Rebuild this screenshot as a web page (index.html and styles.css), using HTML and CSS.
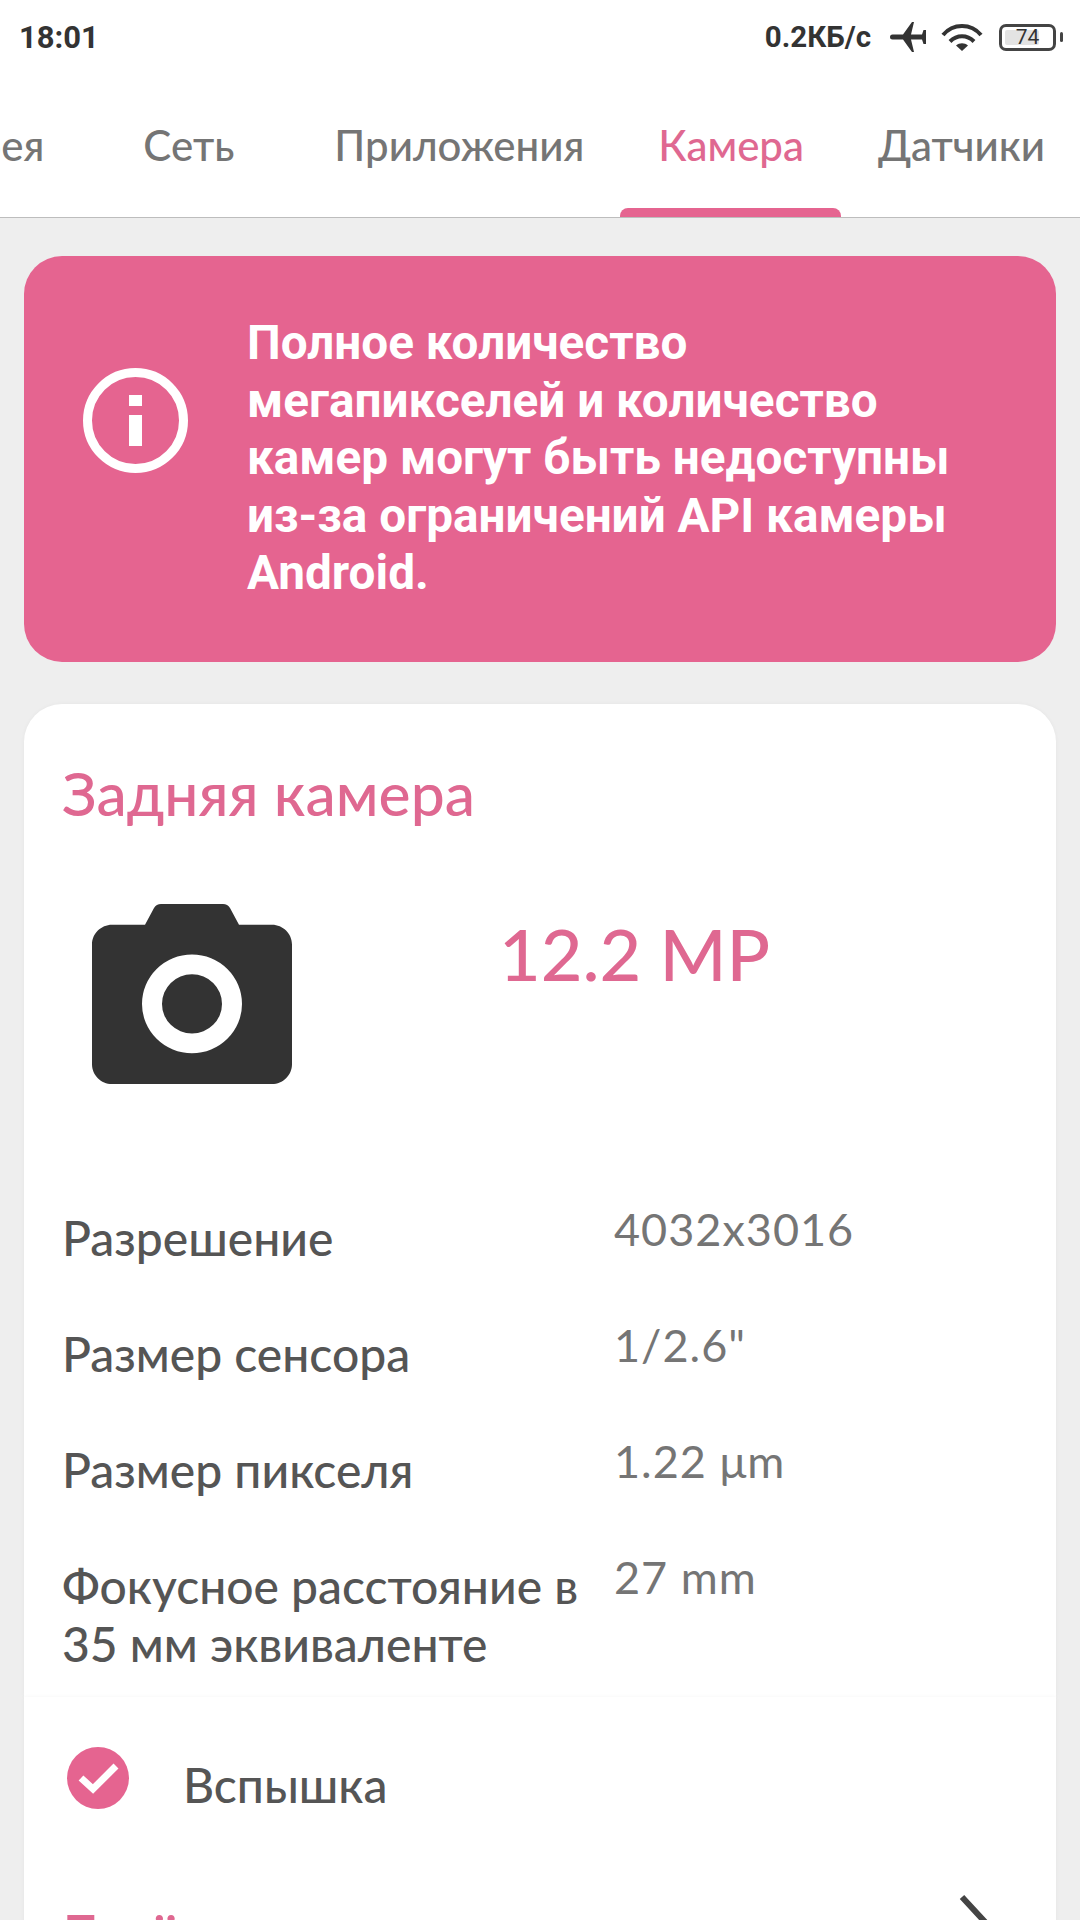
FILE: index.html
```html
<!DOCTYPE html>
<html lang="ru">
<head>
    <meta charset="UTF-8">
    <title>Камера</title>
    <link rel="stylesheet" href="styles.css">
</head>
<body>
    <div class="statusbar">
        <span class="time">18:01</span>
        <div class="status-right">
            <span class="speed">0.2КБ/с</span>
            <svg class="plane" width="36" height="30" viewBox="0 0 36 30">
                <path d="M2.500 12.500H13L22 0h2l-3 12.500h11L33.500 8H36v14h-2.500L32 17.500H21L24 30h-2L13 17.500H2.500a2.500 2.500 0 0 1 0-5z" fill="#333"/>
            </svg>
            <svg class="wifi" width="42" height="27" viewBox="0 0 42 27">
                <path d="M2 11C12 -1 30 -1 40 11" fill="none" stroke="#333" stroke-width="4"/>
                <path d="M9 17.500C16 10.500 26 10.500 33 17.500" fill="none" stroke="#333" stroke-width="4"/>
                <path d="M15 21.500c3.500-3 8.500-3 12 0L21 27z" fill="#333"/>
            </svg>
            <div class="battery">
                <div class="battery-body">
                    <div class="battery-fill"></div>
                    <span class="battery-num">74</span>
                </div>
                <div class="battery-cap"></div>
            </div>
        </div>
    </div>

    <div class="tabs">
        <div class="tab tab-first">Батарея</div>
        <div class="tab tab-net">Сеть</div>
        <div class="tab tab-apps">Приложения</div>
        <div class="tab tab-active">Камера</div>
        <div class="tab tab-sensors">Датчики</div>
    </div>

    <div class="content">
        <div class="notice">
            <svg class="notice-icon" width="105" height="105" viewBox="0 0 105 105">
                <circle cx="52.500" cy="52.500" r="48" fill="none" stroke="#fff" stroke-width="9"/>
                <rect x="46" y="27" width="13" height="11" fill="#fff"/>
                <rect x="46" y="47" width="13" height="31" fill="#fff"/>
            </svg>
            <p class="notice-text">Полное количество мегапикселей и количество камер могут быть недоступны из-за ограничений API камеры Android.</p>
        </div>

        <div class="card card-main">
            <h2 class="card-title">Задняя камера</h2>
            <div class="camera-row">
                <svg class="camera-icon" width="200" height="180" viewBox="0 0 200 182" preserveAspectRatio="none">
                    <path fill-rule="evenodd" fill="#333" d="M20 21h33l9-17c1.500-2.500 4-4 7-4h62c3 0 5.500 1.500 7 4l9 17h33c11 0 20 9 20 20v121c0 11-9 20-20 20H20c-11 0-20-9-20-20V41c0-11 9-20 20-20zM100 51a50 50 0 1 0 0 100a50 50 0 1 0 0-100zM100 71a30 30 0 1 1 0 60a30 30 0 1 1 0-60z"/>
                </svg>
                <div class="megapixels">12.2 MP</div>
            </div>
            <div class="spec-row">
                <div class="spec-name">Разрешение</div>
                <div class="spec-value">4032x3016</div>
            </div>
            <div class="spec-row">
                <div class="spec-name">Размер сенсора</div>
                <div class="spec-value">1/2.6"</div>
            </div>
            <div class="spec-row">
                <div class="spec-name">Размер пикселя</div>
                <div class="spec-value">1.22 μm</div>
            </div>
            <div class="spec-row">
                <div class="spec-name">Фокусное расстояние в 35 мм эквиваленте</div>
                <div class="spec-value">27 mm</div>
            </div>
        </div>

        <div class="card card-lower">
            <div class="feature">
                <svg class="check" width="62" height="62" viewBox="0 0 62 62">
                    <circle cx="31" cy="31" r="31" fill="#e56490"/>
                    <path d="M14 31l12 11 23-23" fill="none" stroke="#fff" stroke-width="7"/>
                </svg>
                <span class="feature-name">Вспышка</span>
            </div>
            <div class="more-row">
                <span class="more-title">Ещё</span>
                <svg class="chevron" width="32" height="50" viewBox="0 0 32 50">
                    <path d="M3 2l24 26-24 26" fill="none" stroke="#444" stroke-width="6"/>
                </svg>
            </div>
        </div>
    </div>
</body>
</html>
```

FILE: styles.css
```css
html, body {
    margin: 0;
    padding: 0;
}
body {
    width: 1080px;
    height: 1920px;
    overflow: hidden;
    background-color: #eeeeee;
    font-family: Lato, "Noto Sans", sans-serif;
}
.statusbar {
    height: 74px;
    background-color: #fff;
    display: flex;
    align-items: center;
    justify-content: space-between;
    padding: 0 17px 0 19px;
    color: #333;
}
.time {
    font-family: Roboto, sans-serif;
    font-size: 31px;
    font-weight: 700;
}
.status-right {
    display: flex;
    align-items: center;
}
.speed {
    font-family: Roboto, sans-serif;
    font-size: 29.500px;
    font-weight: 700;
    margin-right: 19px;
}
.plane {
    margin-right: 15px;
}
.wifi {
    margin-right: 16px;
}
.battery {
    display: flex;
    align-items: center;
}
.battery-body {
    position: relative;
    box-sizing: border-box;
    width: 57px;
    height: 27px;
    border: 3px solid #444;
    border-radius: 7px;
    display: flex;
    align-items: center;
    justify-content: center;
}
.battery-fill {
    position: absolute;
    left: 3px;
    top: 3px;
    bottom: 3px;
    width: 34px;
    background-color: #e3e3e3;
    border-radius: 2px;
}
.battery-num {
    position: relative;
    font-family: Roboto, sans-serif;
    font-size: 21px;
    color: #333;
}
.battery-cap {
    width: 3px;
    height: 10px;
    margin-left: 4px;
    background-color: #444;
    border-radius: 2px;
}
.tabs {
    position: relative;
    height: 143px;
    background-color: #fff;
    border-bottom: 1px solid #bdbdbd;
    display: flex;
    align-items: flex-start;
    overflow: hidden;
    font-size: 42px;
    font-weight: 500;
    color: #757575;
}
.tab {
    white-space: nowrap;
    padding-top: 46px;
}
.tab-first {
    margin-left: -111px;
}
.tab-net {
    margin-left: 99px;
}
.tab-apps {
    margin-left: 100px;
}
.tab-active {
    margin-left: 74px;
    color: #df6891;
    position: relative;
}
.tab-active::after {
    content: "";
    position: absolute;
    left: -38px;
    right: -37px;
    top: 134px;
    height: 9px;
    background-color: #e56490;
    border-radius: 8px 8px 0 0;
}
.tab-sensors {
    margin-left: 74px;
}
.content {
    padding: 38px 24px 0;
}
.notice {
    height: 406px;
    background-color: #e56490;
    border-radius: 38px;
    display: flex;
    align-items: center;
    padding: 0 79px 0 59px;
}
.notice-icon {
    flex: none;
    align-self: flex-start;
    margin-top: 112px;
}
.notice-text {
    margin: 0 0 0 59px;
    font-family: Roboto, sans-serif;
    font-size: 47.700px;
    font-weight: 700;
    line-height: 57.500px;
    color: #fff;
}
.card {
    background-color: #fff;
    box-shadow: 0 0 4px rgba(0, 0, 0, 0.04);
}
.card-main {
    margin-top: 42px;
    border-radius: 38px 38px 0 0;
    padding: 56px 36px 0 38px;
    height: 993px;
    box-sizing: border-box;
}
.card-title {
    margin: 0;
    font-size: 60.500px;
    font-weight: 500;
    line-height: 66px;
    color: #df6891;
}
.camera-row {
    display: flex;
    align-items: flex-start;
    margin-top: 78px;
    height: 305px;
}
.camera-icon {
    flex: none;
    margin-left: 30px;
}
.megapixels {
    margin-left: 207px;
    margin-top: 5px;
    font-size: 72px;
    font-weight: 500;
    line-height: 88px;
    color: #df6891;
}
.spec-row {
    display: flex;
    align-items: flex-start;
    font-size: 48px;
    line-height: 57.500px;
    margin-bottom: 58.500px;
}
.spec-name {
    width: 552px;
    flex: none;
    font-weight: 500;
    color: #555;
}
.spec-value {
    margin-top: -8px;
    font-size: 45px;
    color: #757575;
    letter-spacing: 1px;
}
.card-lower {
    height: 300px;
}
.feature {
    display: flex;
    align-items: center;
    padding: 45px 0 0 43px;
}
.feature-name {
    margin-left: 54px;
    margin-top: 14px;
    font-size: 48px;
    font-weight: 500;
    color: #555;
}
.more-row {
    display: flex;
    justify-content: space-between;
    align-items: flex-start;
    padding: 82px 65px 0 38px;
}
.more-title {
    font-size: 60.500px;
    font-weight: 500;
    color: #df6891;
    line-height: 66px;
    margin-top: 7px;
}
.chevron {
    overflow: visible;
}
```
